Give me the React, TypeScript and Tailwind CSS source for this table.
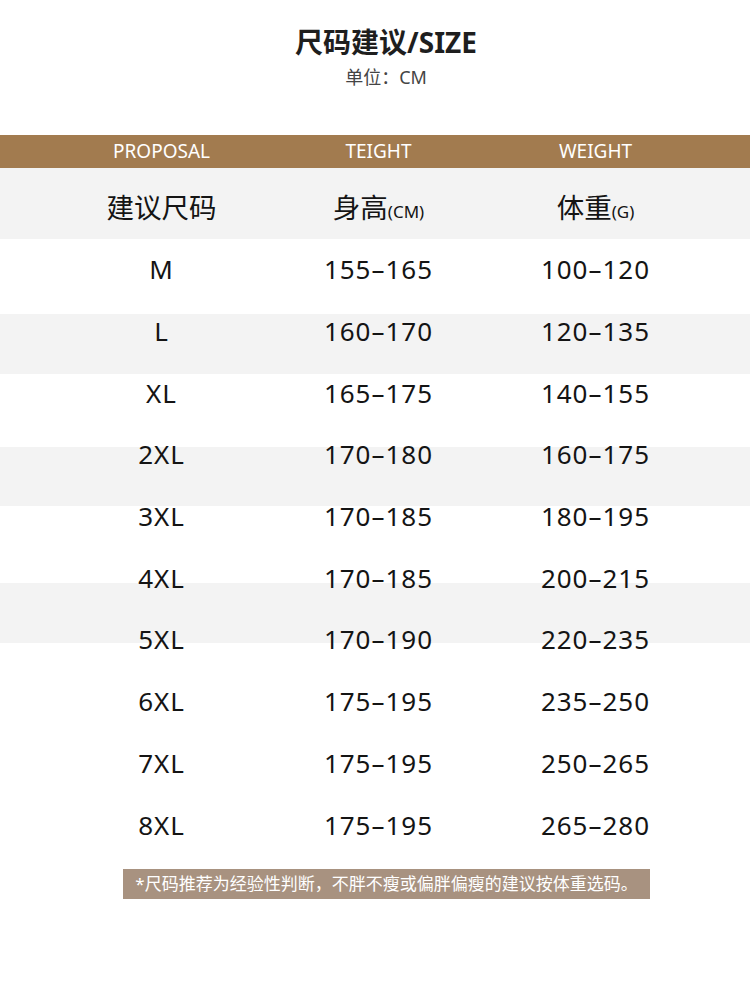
import React from 'react';

const rows: [string, string, string][] = [
  ['M', '155–165', '100–120'],
  ['L', '160–170', '120–135'],
  ['XL', '165–175', '140–155'],
  ['2XL', '170–180', '160–175'],
  ['3XL', '170–185', '180–195'],
  ['4XL', '170–185', '200–215'],
  ['5XL', '170–190', '220–235'],
  ['6XL', '175–195', '235–250'],
  ['7XL', '175–195', '250–265'],
  ['8XL', '175–195', '265–280'],
];

const font = "font-['Noto_Sans','Noto_Sans_CJK_SC',sans-serif]";

// gray bands behind the rows (they don't line up with the text rows in the original)
const Stripes: React.FC = () => (
  <div className="col-start-1 row-start-1 flex flex-col">
    <div className="h-[75px]" />
    <div className="h-[60px] bg-[#f3f3f3]" />
    <div className="h-[73px]" />
    <div className="h-[59px] bg-[#f3f3f3]" />
    <div className="h-[77px]" />
    <div className="h-[60px] bg-[#f3f3f3]" />
  </div>
);

export default function App() {
  return (
    <div className={`w-[750px] h-[1006px] bg-white text-[#141414] ${font}`}>
      {/* Title */}
      <div className="pt-[26px] pl-[22px] flex flex-col items-center">
        <div className="text-[28px] leading-[32px] font-bold text-[#1e1e1e]">尺码建议/SIZE</div>
        <div className="mt-[7px] text-[18px] leading-[24px] text-[#444]">单位：CM</div>
      </div>

      {/* Brown band */}
      <div className="mt-[46px] h-[33px] bg-[#a27b4f] pl-[53px] grid grid-cols-[217px_217px_217px] items-center text-white text-[19px]">
        <div className="text-center">PROPOSAL</div>
        <div className="text-center">TEIGHT</div>
        <div className="text-center">WEIGHT</div>
      </div>

      {/* Column heads */}
      <div className="h-[71px] bg-[#f3f3f3] pl-[53px] pt-[8px] grid grid-cols-[217px_217px_217px] items-center text-[27.5px]">
        <div className="text-center">建议尺码</div>
        <div className="text-center">
          身高<span className="text-[17px]">(CM)</span>
        </div>
        <div className="text-center">
          体重<span className="text-[17px]">(G)</span>
        </div>
      </div>

      {/* Body */}
      <div className="grid">
        <Stripes />
        <div className="col-start-1 row-start-1 flex flex-col pl-[53px]">
          {rows.map(([size, h, w]) => (
            <div
              key={size}
              className="h-[61.7px] grid grid-cols-[217px_217px_217px] items-center text-[26px] tracking-[1px]"
            >
              <div className="text-center">{size}</div>
              <div className="text-center">{h}</div>
              <div className="text-center">{w}</div>
            </div>
          ))}
        </div>
      </div>

      {/* Note */}
      <div className="mt-[13px] ml-[123px] w-[527px] h-[30px] bg-[#a89280] flex items-center justify-center text-white text-[17px]">
        *尺码推荐为经验性判断，不胖不瘦或偏胖偏瘦的建议按体重选码。
      </div>
    </div>
  );
}
